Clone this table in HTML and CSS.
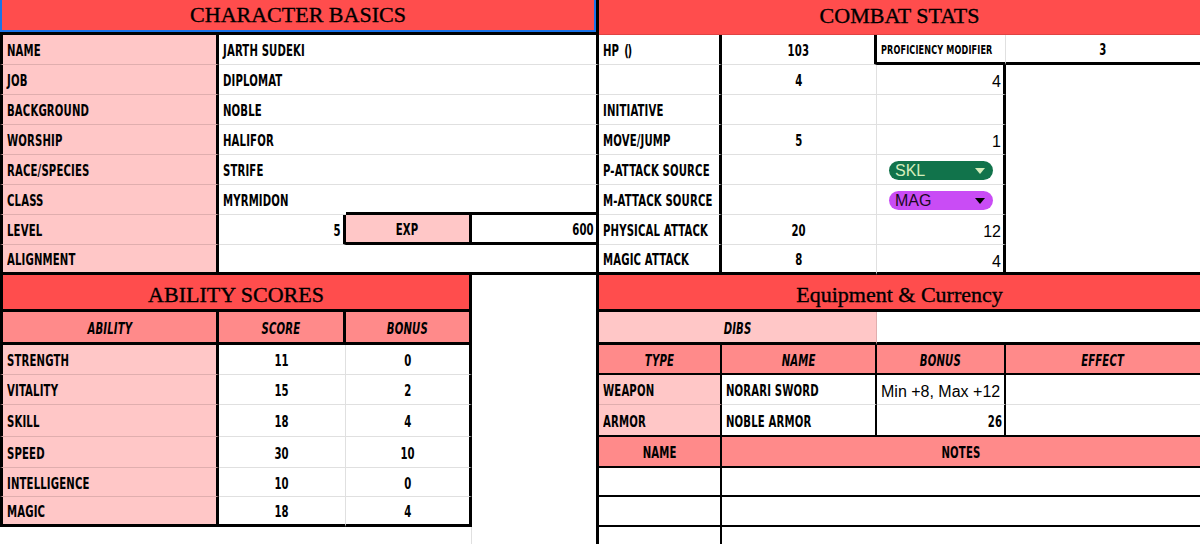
FILE: index.html
```html
<!DOCTYPE html>
<html>
<head>
<meta charset="utf-8">
<title>Character Sheet</title>
<link rel="stylesheet" href="styles.css">
</head>
<body>
<div class="sheet">
  <!-- row 1 -->
  <div class="c hd1 top sel s4">CHARACTER BASICS</div>
  <div class="c hd1 top s4 nr">COMBAT STATS</div>

  <!-- row 2 -->
  <div class="c lab bl brk"><span class="t">NAME</span></div>
  <div class="c s3 brk"><span class="t">JARTH SUDEKI</span></div>
  <div class="c brk"><span class="t">HP <span class="paren">()</span></span></div>
  <div class="c ctr brk"><span class="t">103</span></div>
  <div class="c small bbk"><span class="t">PROFICIENCY MODIFIER</span></div>
  <div class="c ctr bbk nr"><span class="t">3</span></div>

  <!-- row 3 -->
  <div class="c lab bl brk"><span class="t">JOB</span></div>
  <div class="c s3 brk"><span class="t">DIPLOMAT</span></div>
  <div class="c brk"></div>
  <div class="c ctr"><span class="t">4</span></div>
  <div class="c ar rt brk">4</div>
  <div class="c r7 bbk nr"></div>

  <!-- row 4 -->
  <div class="c lab bl brk"><span class="t">BACKGROUND</span></div>
  <div class="c s3 brk"><span class="t">NOBLE</span></div>
  <div class="c brk"><span class="t">INITIATIVE</span></div>
  <div class="c"></div>
  <div class="c brk"></div>

  <!-- row 5 -->
  <div class="c lab bl brk"><span class="t">WORSHIP</span></div>
  <div class="c s3 brk"><span class="t">HALIFOR</span></div>
  <div class="c brk"><span class="t">MOVE/JUMP</span></div>
  <div class="c ctr"><span class="t">5</span></div>
  <div class="c ar rt brk">1</div>

  <!-- row 6 -->
  <div class="c lab bl brk"><span class="t">RACE/SPECIES</span></div>
  <div class="c s3 brk"><span class="t">STRIFE</span></div>
  <div class="c brk"><span class="t">P-ATTACK SOURCE</span></div>
  <div class="c"></div>
  <div class="c brk">
    <span class="chip green">SKL<svg class="arrow" width="10" height="6" viewBox="0 0 10 6"><polygon points="0,0 10,0 5,6"/></svg></span>
  </div>

  <!-- row 7 -->
  <div class="c lab bl brk"><span class="t">CLASS</span></div>
  <div class="c nrb"><span class="t">MYRMIDON</span></div>
  <div class="c nrb bbk"></div>
  <div class="c brk bbk"></div>
  <div class="c brk"><span class="t">M-ATTACK SOURCE</span></div>
  <div class="c"></div>
  <div class="c brk">
    <span class="chip purple">MAG<svg class="arrow" width="10" height="6" viewBox="0 0 10 6"><polygon points="0,0 10,0 5,6"/></svg></span>
  </div>

  <!-- row 8 -->
  <div class="c lab bl brk"><span class="t">LEVEL</span></div>
  <div class="c rt brk"><span class="t">5</span></div>
  <div class="c lab ctr brk bbk"><span class="t">EXP</span></div>
  <div class="c rt brk bbk"><span class="t">600</span></div>
  <div class="c brk"><span class="t">PHYSICAL ATTACK</span></div>
  <div class="c ctr"><span class="t">20</span></div>
  <div class="c ar rt brk">12</div>

  <!-- row 9 -->
  <div class="c lab bl brk bbk"><span class="t">ALIGNMENT</span></div>
  <div class="c s3 brk bbk"></div>
  <div class="c brk bbk"><span class="t">MAGIC ATTACK</span></div>
  <div class="c ctr bbk"><span class="t">8</span></div>
  <div class="c ar rt brk bbk low">4</div>

  <!-- row 10 -->
  <div class="c hd1 mid s3 bl brk bbk">ABILITY SCORES</div>
  <div class="c r9 brk nbb"></div>
  <div class="c hd1 mid s4 bbk nr">Equipment &amp; Currency</div>

  <!-- row 11 -->
  <div class="c hd2 it bl brk bbk"><span class="t">ABILITY</span></div>
  <div class="c hd2 it brk bbk"><span class="t">SCORE</span></div>
  <div class="c hd2 it brk bbk"><span class="t">BONUS</span></div>
  <div class="c lab it ctr s2 bbk"><span class="t">DIBS</span></div>
  <div class="c s2 bbk nr"></div>

  <!-- row 12 -->
  <div class="c lab bl brk"><span class="t">STRENGTH</span></div>
  <div class="c ctr"><span class="t">11</span></div>
  <div class="c ctr brk"><span class="t">0</span></div>
  <div class="c hd2 it brt bbt"><span class="t">TYPE</span></div>
  <div class="c hd2 it brt bbt"><span class="t">NAME</span></div>
  <div class="c hd2 it brt bbt"><span class="t">BONUS</span></div>
  <div class="c hd2 it bbt nr"><span class="t">EFFECT</span></div>

  <!-- row 13 -->
  <div class="c lab bl brk"><span class="t">VITALITY</span></div>
  <div class="c ctr"><span class="t">15</span></div>
  <div class="c ctr brk"><span class="t">2</span></div>
  <div class="c lab brt"><span class="t">WEAPON</span></div>
  <div class="c brt"><span class="t">NORARI SWORD</span></div>
  <div class="c ar clip brt">Min +8, Max +12</div>
  <div class="c nr"></div>

  <!-- row 14 -->
  <div class="c lab bl brk"><span class="t">SKILL</span></div>
  <div class="c ctr"><span class="t">18</span></div>
  <div class="c ctr brk"><span class="t">4</span></div>
  <div class="c lab brt bbt"><span class="t">ARMOR</span></div>
  <div class="c brt bbt"><span class="t">NOBLE ARMOR</span></div>
  <div class="c rt brt bbt"><span class="t">26</span></div>
  <div class="c bbt nr"></div>

  <!-- row 15 -->
  <div class="c lab bl brk"><span class="t">SPEED</span></div>
  <div class="c ctr"><span class="t">30</span></div>
  <div class="c ctr brk"><span class="t">10</span></div>
  <div class="c hd2 brt bbt"><span class="t">NAME</span></div>
  <div class="c hd2 s3 bbt nr"><span class="t">NOTES</span></div>

  <!-- row 16 -->
  <div class="c lab bl brk"><span class="t">INTELLIGENCE</span></div>
  <div class="c ctr"><span class="t">10</span></div>
  <div class="c ctr brk"><span class="t">0</span></div>
  <div class="c brt bbt"></div>
  <div class="c s3 bbt nr"></div>

  <!-- row 17 -->
  <div class="c lab bl brk bbk"><span class="t">MAGIC</span></div>
  <div class="c ctr bbk"><span class="t">18</span></div>
  <div class="c ctr brk bbk"><span class="t">4</span></div>
  <div class="c brt bbt"></div>
  <div class="c s3 bbt nr"></div>

  <!-- row 18 -->
  <div class="c s3"></div>
  <div class="c brt bbt"></div>
  <div class="c s3 bbt nr"></div>
</div>
</body>
</html>
```

FILE: styles.css
```css
html, body {
  margin: 0;
  padding: 0;
  background: #ffffff;
}

.sheet {
  display: grid;
  grid-template-columns: 219px 127px 126px 127px 123px 155px 129px 194px;
  grid-template-rows: 35px repeat(8, 30px) 37px 33px 30px 30px 32px 31px 29px 30px 30px;
  width: 1200px;
  height: 544px;
  overflow: hidden;
  font-family: "DejaVu Sans Condensed", "DejaVu Sans", sans-serif;
  font-weight: bold;
  font-size: 15px;
  color: #000;
}

.c {
  box-sizing: border-box;
  display: flex;
  align-items: center;
  padding: 0 4px;
  white-space: nowrap;
  overflow: hidden;
  background: #ffffff;
  border-right: 1px solid rgba(0, 0, 0, 0.12);
  border-bottom: 1px solid rgba(0, 0, 0, 0.12);
}

/* condensed display text */
.t {
  display: inline-block;
  margin-top: 3px;
  transform: scaleX(0.75);
  transform-origin: left center;
  letter-spacing: 0.2px;
}

.ctr .t, .hd2 .t { transform-origin: center center; }
.rt .t { transform-origin: right center; }

/* spans */
.s2 { grid-column: span 2; }
.s3 { grid-column: span 3; }
.s4 { grid-column: span 4; }
.r7 { grid-row: span 7; }
.r9 { grid-row: span 9; }

/* borders */
.bl  { border-left: 3px solid #000; }
.brk { border-right: 3px solid #000; }
.brt { border-right: 2px solid #000; }
.bbk { border-bottom: 3px solid #000; }
.bbt { border-bottom: 2px solid #000; }
.nr  { border-right: none; }
.nrb { border-right: none; }
.nbb { border-bottom: none; }

/* fills */
.lab { background: #ffc7c7; }
.hd2 { background: #ff8a8a; justify-content: center; }

.hd1 {
  background: #ff4d4d;
  justify-content: center;
  font-family: "Liberation Serif", "Times New Roman", serif;
  font-weight: normal;
  font-size: 22px;
  -webkit-text-stroke: 0.35px #000;
}

.top { padding-bottom: 3px; }
.mid { padding-top: 5px; }

.sel {
  border-right: 3px solid #000;
  border-bottom: 3px solid #000;
  box-shadow: inset 2px 0 0 #1a73e8, inset -2px 0 0 #1a73e8, inset 0 -2px 0 #1a73e8;
}

/* alignment */
.ctr { justify-content: center; }
.rt  { justify-content: flex-end; padding-right: 2px; }
.it  { font-style: italic; }
.low { align-items: flex-end; padding-bottom: 1px; }
.clip { padding-right: 0; }

.small { font-size: 12px; }

.ar {
  font-family: "Liberation Sans", Arial, sans-serif;
  font-weight: normal;
  font-size: 16px;
  padding-top: 4px;
}

.ar.low { padding-top: 0; }

.paren {
  letter-spacing: -2px;
  margin-left: 2px;
}

/* dropdown chips */
.chip {
  box-sizing: border-box;
  display: flex;
  align-items: center;
  justify-content: space-between;
  width: 104px;
  height: 19px;
  margin-left: 8px;
  margin-top: 2px;
  padding: 0 8px 0 6px;
  border-radius: 10px;
  font-family: "Liberation Sans", Arial, sans-serif;
  font-weight: normal;
  font-size: 16px;
}

.chip .arrow {
  display: block;
}

.green {
  background: #11734b;
  color: #d4edbc;
}

.green .arrow polygon {
  fill: #d4edbc;
}

.purple {
  background: #c94cf5;
  color: #1a0822;
}

.purple .arrow polygon {
  fill: #000;
}
```
